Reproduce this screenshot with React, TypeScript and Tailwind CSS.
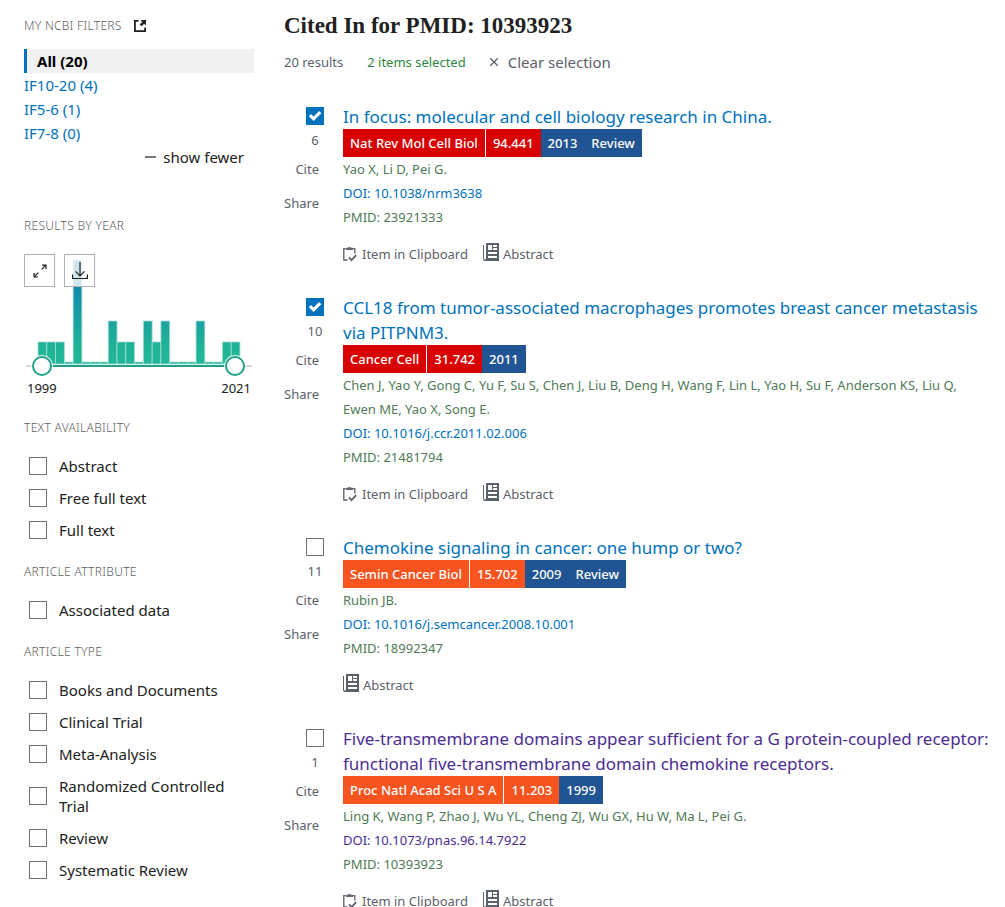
import React from "react";

type Article = {
  n: number;
  title: string;
  journal: string;
  factor: string;
  tone: string;
  year: string;
  review?: boolean;
  authors: string;
  doi: string;
  pmid: string;
  clipboard?: boolean;
  checked?: boolean;
  visited?: boolean;
};

const articles: Article[] = [
  { n: 6, title: "In focus: molecular and cell biology research in China.", journal: "Nat Rev Mol Cell Biol", factor: "94.441", tone: "bg-[#d90000]", year: "2013", review: true, authors: "Yao X, Li D, Pei G.", doi: "10.1038/nrm3638", pmid: "23921333", clipboard: true, checked: true },
  { n: 10, title: "CCL18 from tumor-associated macrophages promotes breast cancer metastasis via PITPNM3.", journal: "Cancer Cell", factor: "31.742", tone: "bg-[#d90000]", year: "2011", authors: "Chen J, Yao Y, Gong C, Yu F, Su S, Chen J, Liu B, Deng H, Wang F, Lin L, Yao H, Su F, Anderson KS, Liu Q, Ewen ME, Yao X, Song E.", doi: "10.1016/j.ccr.2011.02.006", pmid: "21481794", clipboard: true, checked: true },
  { n: 11, title: "Chemokine signaling in cancer: one hump or two?", journal: "Semin Cancer Biol", factor: "15.702", tone: "bg-[#f75420]", year: "2009", review: true, authors: "Rubin JB.", doi: "10.1016/j.semcancer.2008.10.001", pmid: "18992347" },
  { n: 1, title: "Five-transmembrane domains appear sufficient for a G protein-coupled receptor: functional five-transmembrane domain chemokine receptors.", journal: "Proc Natl Acad Sci U S A", factor: "11.203", tone: "bg-[#f75420]", year: "1999", authors: "Ling K, Wang P, Zhao J, Wu YL, Cheng ZJ, Wu GX, Hu W, Ma L, Pei G.", doi: "10.1073/pnas.96.14.7922", pmid: "10393923", clipboard: true, visited: true },
];

const counts = [1, 1, 1, 0, 5, 0, 0, 0, 2, 1, 1, 0, 2, 1, 2, 0, 0, 0, 2, 0, 0, 1, 1];
const heights: Record<number, number> = { 0: 2, 1: 22, 2: 43, 5: 104 };

function Check({ id, checked }: { id: string; checked?: boolean }) {
  return (
    <span className="grid size-[18px] shrink-0">
      <input
        id={id}
        type="checkbox"
        defaultChecked={checked}
        className="peer col-start-1 row-start-1 size-[18px] appearance-none border border-[#6b6e73] bg-white checked:border-[#0071bc] checked:bg-[#0071bc]"
      />
      <svg viewBox="0 0 18 18" className="pointer-events-none col-start-1 row-start-1 hidden size-[18px] peer-checked:block" fill="none" stroke="#fff" strokeWidth="3.2">
        <path d="M3.9 8.2 7.6 11.8 14.2 5.2" />
      </svg>
    </span>
  );
}

function SideHeading({ children }: { children: React.ReactNode }) {
  return <h2 className="text-xs leading-5 font-light tracking-wide text-[#5b5e63] uppercase">{children}</h2>;
}

function FilterGroup({ title, items }: { title: string; items: string[] }) {
  return (
    <section className="mt-[22px]">
      <SideHeading>{title}</SideHeading>
      <ul className="mt-[18px] flex flex-col gap-3">
        {items.map((item) => (
          <li key={item} className="flex items-center gap-3 pl-[5px] text-[15px] leading-5">
            <Check id={item} />
            <label htmlFor={item}>{item}</label>
          </li>
        ))}
      </ul>
    </section>
  );
}

function Timeline() {
  return (
    <svg viewBox="0 0 230 122" className="col-start-1 row-start-1 w-full" aria-label="Results by year">
      <defs>
        <linearGradient id="bars" gradientUnits="userSpaceOnUse" x1="0" y1="6" x2="0" y2="110">
          <stop offset="0" stopColor="#1276b5" />
          <stop offset="0.6" stopColor="#1ba3a0" />
          <stop offset="0.85" stopColor="#20b496" />
          <stop offset="1" stopColor="#20b898" />
        </linearGradient>
      </defs>
      {counts.map((c, i) => (
        <rect key={i} x={14 + i * 8.78} y={110 - heights[c]} width="8.78" height={heights[c]} fill="url(#bars)" stroke="#a4dcd2" strokeWidth="0.8" />
      ))}
      <path d="M2 112H228" stroke="#d6d7d9" strokeWidth="2" />
      <path d="M18 112H211" stroke="#20a088" strokeWidth="2" />
      <circle cx="18" cy="112" r="11" fill="#fff" fillOpacity="0.8" />
      <circle cx="211" cy="112" r="11" fill="#fff" fillOpacity="0.8" />
      <circle cx="18" cy="112" r="9" fill="#fff" stroke="#20a088" strokeWidth="2" />
      <circle cx="211" cy="112" r="9" fill="#fff" stroke="#20a088" strokeWidth="2" />
    </svg>
  );
}

function ClipboardIcon() {
  return (
    <svg viewBox="0 0 14 16" className="h-4 w-3.5" fill="none" stroke="#5b616b" strokeWidth="1.3">
      <path d="M4.6 14H.8V2.6H2.6M10.2 2.6h1.6V7.6" />
      <path d="M3 3.4h7" strokeWidth="1" />
      <path d="M3 3.2V2.2h1.6L5.2 1.4h2.6l.6 .8H10v1z" fill="#5b616b" strokeWidth="0.6" />
      <path d="M6 11.4l2.5 2.7 4.7-5" strokeWidth="1.8" />
    </svg>
  );
}

function AbstractIcon() {
  return (
    <svg viewBox="0 0 16 18" className="mb-1 h-[18px] w-4" fill="#5b616b">
      <path
        fillRule="evenodd"
        d="M3 0H16V18H2Q0 18 0 16V2H1V15.5Q1 16.4 2 16.4 3 16.4 3 15.5ZM5 2V7H9V2ZM10 2V4H14V2ZM10 5V7H14V5ZM5 9V11H14V9ZM5 13V15H14V13Z"
      />
    </svg>
  );
}

function ArticleRow({ a }: { a: Article }) {
  const link = a.visited ? "text-[#4c2c92]" : "text-[#0071bc]";
  return (
    <article className="flex gap-[19px]">
      <div className="flex w-10 shrink-0 flex-col items-end text-[13px] leading-6 text-[#5b616b]">
        <div className="flex w-[18px] flex-col items-center pt-[3px]">
          <Check id={`pick-${a.n}`} checked={a.checked} />
          <label htmlFor={`pick-${a.n}`} className="mt-[3px]">{a.n}</label>
        </div>
        <button className="mt-[5px] pr-[5px]">Cite</button>
        <button className="mt-2.5 pr-[5px]">Share</button>
      </div>
      <div className="min-w-0 flex-1 text-[13px] leading-6 text-[#4f7a58]">
        <h2 className="text-[17px] leading-[25px]">
          <a href="#article" className={link}>{a.title}</a>
        </h2>
        <div className="flex h-7 items-stretch leading-7 font-medium text-white">
          <span className={`mr-px px-[7px] ${a.tone}`}>{a.journal}</span>
          <span className={`px-[7px] ${a.tone}`}>{a.factor}</span>
          <span className="bg-[#205493] px-[7px]">{a.year}</span>
          {a.review && <span className="bg-[#205493] px-[7px]">Review</span>}
        </div>
        <p>{a.authors}</p>
        <p><a href="#doi" className={link}>DOI: {a.doi}</a></p>
        <p>PMID: {a.pmid}</p>
        <div className="mt-[13px] flex gap-[15px] text-[#5b616b]">
          {a.clipboard && (
            <button className="flex items-center gap-[5px]"><ClipboardIcon />Item in Clipboard</button>
          )}
          <button className="flex items-center gap-1"><AbstractIcon />Abstract</button>
        </div>
      </div>
    </article>
  );
}

export default function App() {
  return (
    <div className="flex gap-[30px] bg-white pr-4 pl-6 font-['Noto_Sans','Open_Sans',sans-serif] text-[#212121]">
      <aside className="w-[230px] shrink-0 pt-4">
        <div className="flex items-center gap-3">
          <SideHeading>My NCBI Filters</SideHeading>
          <a href="#filters" aria-label="Manage filters">
            <svg viewBox="0 0 12 12" className="size-3" fill="none" stroke="#212121" strokeWidth="1.8">
              <path d="M4.5 .9H.9V11.1H11.1V7.5" />
              <path d="M6.5 0H12V5.5L10.2 3.8 7.6 6.3 5.7 4.4 8.3 1.8Z" fill="#212121" stroke="none" />
            </svg>
          </a>
        </div>
        <ul className="mt-[13px] text-[15px] leading-6 text-[#0071bc]">
          <li className="border-l-3 border-[#0071bc] bg-[#f1f1f1] pl-2.5 font-bold text-black">All (20)</li>
          <li><a href="#f1">IF10-20 (4)</a></li>
          <li><a href="#f2">IF5-6 (1)</a></li>
          <li><a href="#f3">IF7-8 (0)</a></li>
        </ul>
        <div className="flex justify-end pr-2.5">
          <button className="flex items-center gap-[7px] text-[15px] leading-6">
            <span className="h-0.5 w-[11px] bg-[#777]" />show fewer
          </button>
        </div>
        <section className="mt-[47px]">
          <SideHeading>Results by year</SideHeading>
          <div className="mt-[18px] grid">
            <Timeline />
            <div className="z-10 col-start-1 row-start-1 flex h-[33px] gap-[9px]">
              <button aria-label="Expand" className="grid w-[31px] place-items-center border border-[#aeb0b5] bg-white/80">
                <svg viewBox="0 0 14 14" className="size-3.5" fill="none" stroke="#212121" strokeWidth="1.2">
                  <path d="M8.6 5.4 12.8 1.2M9 1.1h4V5M5.4 8.6 1.2 12.8M1.1 9v4H5" />
                </svg>
              </button>
              <button aria-label="Download" className="grid w-[31px] place-items-center border border-[#aeb0b5] bg-white/80">
                <svg viewBox="0 0 16 18" className="h-[18px] w-4" fill="none" stroke="#212121">
                  <path d="M8 0v14M3.5 9.3 8 14l4.5-4.7M.6 12.5v4h14.8v-4" strokeWidth="1.2" />
                </svg>
              </button>
            </div>
          </div>
          <div className="flex justify-between px-[3px] text-[13px] leading-6"><span>1999</span><span>2021</span></div>
        </section>
        <div className="-mt-1">
          <FilterGroup title="Text availability" items={["Abstract", "Free full text", "Full text"]} />
          <FilterGroup title="Article attribute" items={["Associated data"]} />
          <FilterGroup title="Article type" items={["Books and Documents", "Clinical Trial", "Meta-Analysis", "Randomized Controlled Trial", "Review", "Systematic Review"]} />
        </div>
      </aside>
      <main className="min-w-0 flex-1 pt-2.5">
        <h1 className="font-['Liberation_Serif',serif] text-[23px] leading-8 font-bold">Cited In for PMID: 10393923</h1>
        <div className="mt-2 flex items-center text-[13px] leading-6 text-[#5b616b]">
          <span>20 results</span>
          <span className="ml-6 text-[#2e8540]">2 items selected</span>
          <button className="ml-6 flex items-center gap-2.5 text-[15px]">
            <svg viewBox="0 0 8 8" className="size-2" stroke="#5b616b" strokeWidth="1.3"><path d="M0 0 8 8M8 0 0 8" /></svg>
            Clear selection
          </button>
        </div>
        <div className="mt-[30px] flex flex-col gap-[29px]">
          {articles.map((a) => <ArticleRow key={a.n} a={a} />)}
        </div>
      </main>
    </div>
  );
}
